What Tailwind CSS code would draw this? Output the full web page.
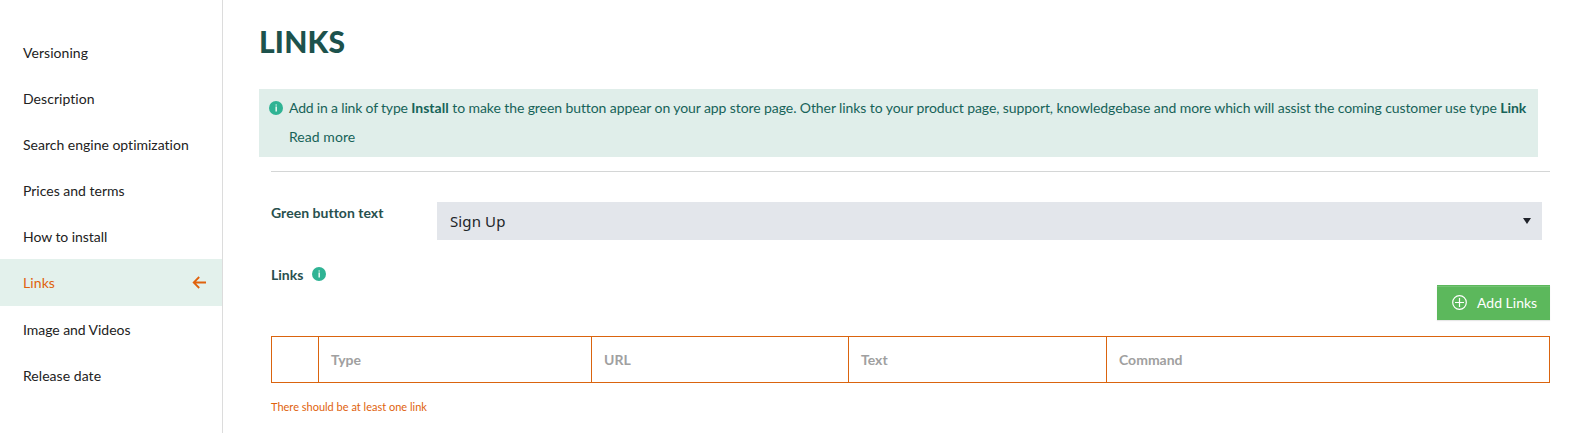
<!DOCTYPE html>
<html lang="en">
<head>
<meta charset="utf-8">
<title>Links</title>
<script src="https://cdn.jsdelivr.net/npm/@tailwindcss/browser@4"></script>
</head>
<body class="flex h-[433px] overflow-hidden bg-white font-['Lato',sans-serif] text-sm text-[#222] [font-variant-ligatures:none]">
<nav class="w-[223px] shrink-0 border-r border-[#dcdcdc] pt-[30px]">
  <a class="flex h-[46px] items-center pl-[23px] tracking-[0.05px]">Versioning</a>
  <a class="flex h-[46px] items-center pl-[23px] tracking-[0.05px]">Description</a>
  <a class="flex h-[46px] items-center pl-[23px]">Search engine optimization</a>
  <a class="flex h-[46px] items-center pl-[23px]">Prices and terms</a>
  <a class="flex h-[45px] items-center pl-[23px] tracking-[-0.05px]">How to install</a>
  <a class="flex h-[47px] items-center justify-between bg-[#e3f1ec] pr-4 pl-[23px] text-[#e0620d]"><span class="tracking-[0.1px]">Links</span>
    <svg class="h-[14px] w-[14px]" viewBox="0 0 14 14" fill="none" stroke="#e0620d" stroke-width="1.8"><path d="M14 6.5H2M7.2 1L1.7 6.5L7.2 12"/></svg>
  </a>
  <a class="mt-px flex h-[46px] items-center pl-[23px] tracking-[-0.05px]">Image and Videos</a>
  <a class="flex h-[46px] items-center pl-[23px] tracking-[0.05px]">Release date</a>
</nav>
<main class="flex-1 pl-9">
  <h1 class="mt-[22px] text-[30px] leading-[38px] font-black tracking-[0.2px] text-[#1d524c]">LINKS</h1>
  <section class="mt-[29px] flex h-[68px] w-[1279px] bg-[#e0eeea] pl-[10px] text-[#176359]">
    <svg class="mt-3 mr-[6px] h-[14px] w-[14px] shrink-0" viewBox="0 0 14 14"><circle cx="7" cy="7" r="7" fill="#2fb394"/><path d="M7.2 5.6v5M7.2 3.4v1.2" stroke="#e8f8f2" stroke-width="1.5" fill="none"/></svg>
    <div class="pt-[4px] leading-[29px] whitespace-nowrap">
      <p class="tracking-[-0.088px]"><span class="tracking-[-0.18px]">Add in a link of type </span><b class="tracking-[0.03px]">Install</b> to make the green button appear on your app store page. Other links to your product page, support, knowledgebase and more which will assist the coming customer use type <b>Link</b></p>
      <p class="tracking-[0.05px]">Read more</p>
    </div>
  </section>
  <div class="ml-3 w-[1279px]">
    <hr class="mt-[14px] border-[#d4d6d6]">
    <div class="mt-[30px] flex">
      <label class="w-[166px] pt-[1px] font-bold tracking-[0.03px] text-[#28504e]">Green button text</label>
      <div class="flex h-[38px] w-[1105px] items-center justify-between bg-[#e3e6eb] pr-[11px] pl-[13px] font-['Noto_Sans',sans-serif] text-[15px] text-[#212529]"><span class="pt-[2px] tracking-[0.12px]">Sign Up</span>
        <svg class="h-[6px] w-2" viewBox="0 0 8 6"><path d="M0 0h8L4 6z" fill="#20232a"/></svg>
      </div>
    </div>
    <div class="mt-6 flex h-[21px] items-center font-bold text-[#28504e]">Links
      <svg class="mb-[2px] ml-[9px] h-[14px] w-[14px]" viewBox="0 0 14 14"><circle cx="7" cy="7" r="7" fill="#2fb394"/><path d="M7.2 5.6v5M7.2 3.4v1.2" stroke="#e8f8f2" stroke-width="1.5" fill="none"/></svg>
    </div>
    <div class="flex justify-end">
      <button class="flex h-[35px] w-[113px] items-center bg-[#5cb85c] pl-[15px] text-white shadow-[inset_0_1px_0_#5cb85c,inset_0_2px_0_#74c374,0_1px_1px_#00000018]">
        <svg class="mr-[10px] h-[15px] w-[15px]" viewBox="0 0 15 15" fill="none" stroke="white" stroke-width="1.2"><circle cx="7.5" cy="7.5" r="6.8"/><path d="M3 7.5h9M7.5 3v9"/></svg>Add Links
      </button>
    </div>
    <div class="mt-4 grid h-[47px] grid-cols-[47px_273px_257px_258px_1fr] border border-[#da640e] font-bold text-[#a0a0a0]">
      <div class="border-r border-[#da640e]"></div>
      <div class="flex items-center border-r border-[#da640e] pl-3">Type</div>
      <div class="flex items-center border-r border-[#da640e] pl-3">URL</div>
      <div class="flex items-center border-r border-[#da640e] pl-3">Text</div>
      <div class="flex items-center pl-3">Command</div>
    </div>
    <p class="mt-4 text-[11px] leading-4 text-[#e0620d]">There should be at least one link</p>
  </div>
</main>
</body>
</html>
